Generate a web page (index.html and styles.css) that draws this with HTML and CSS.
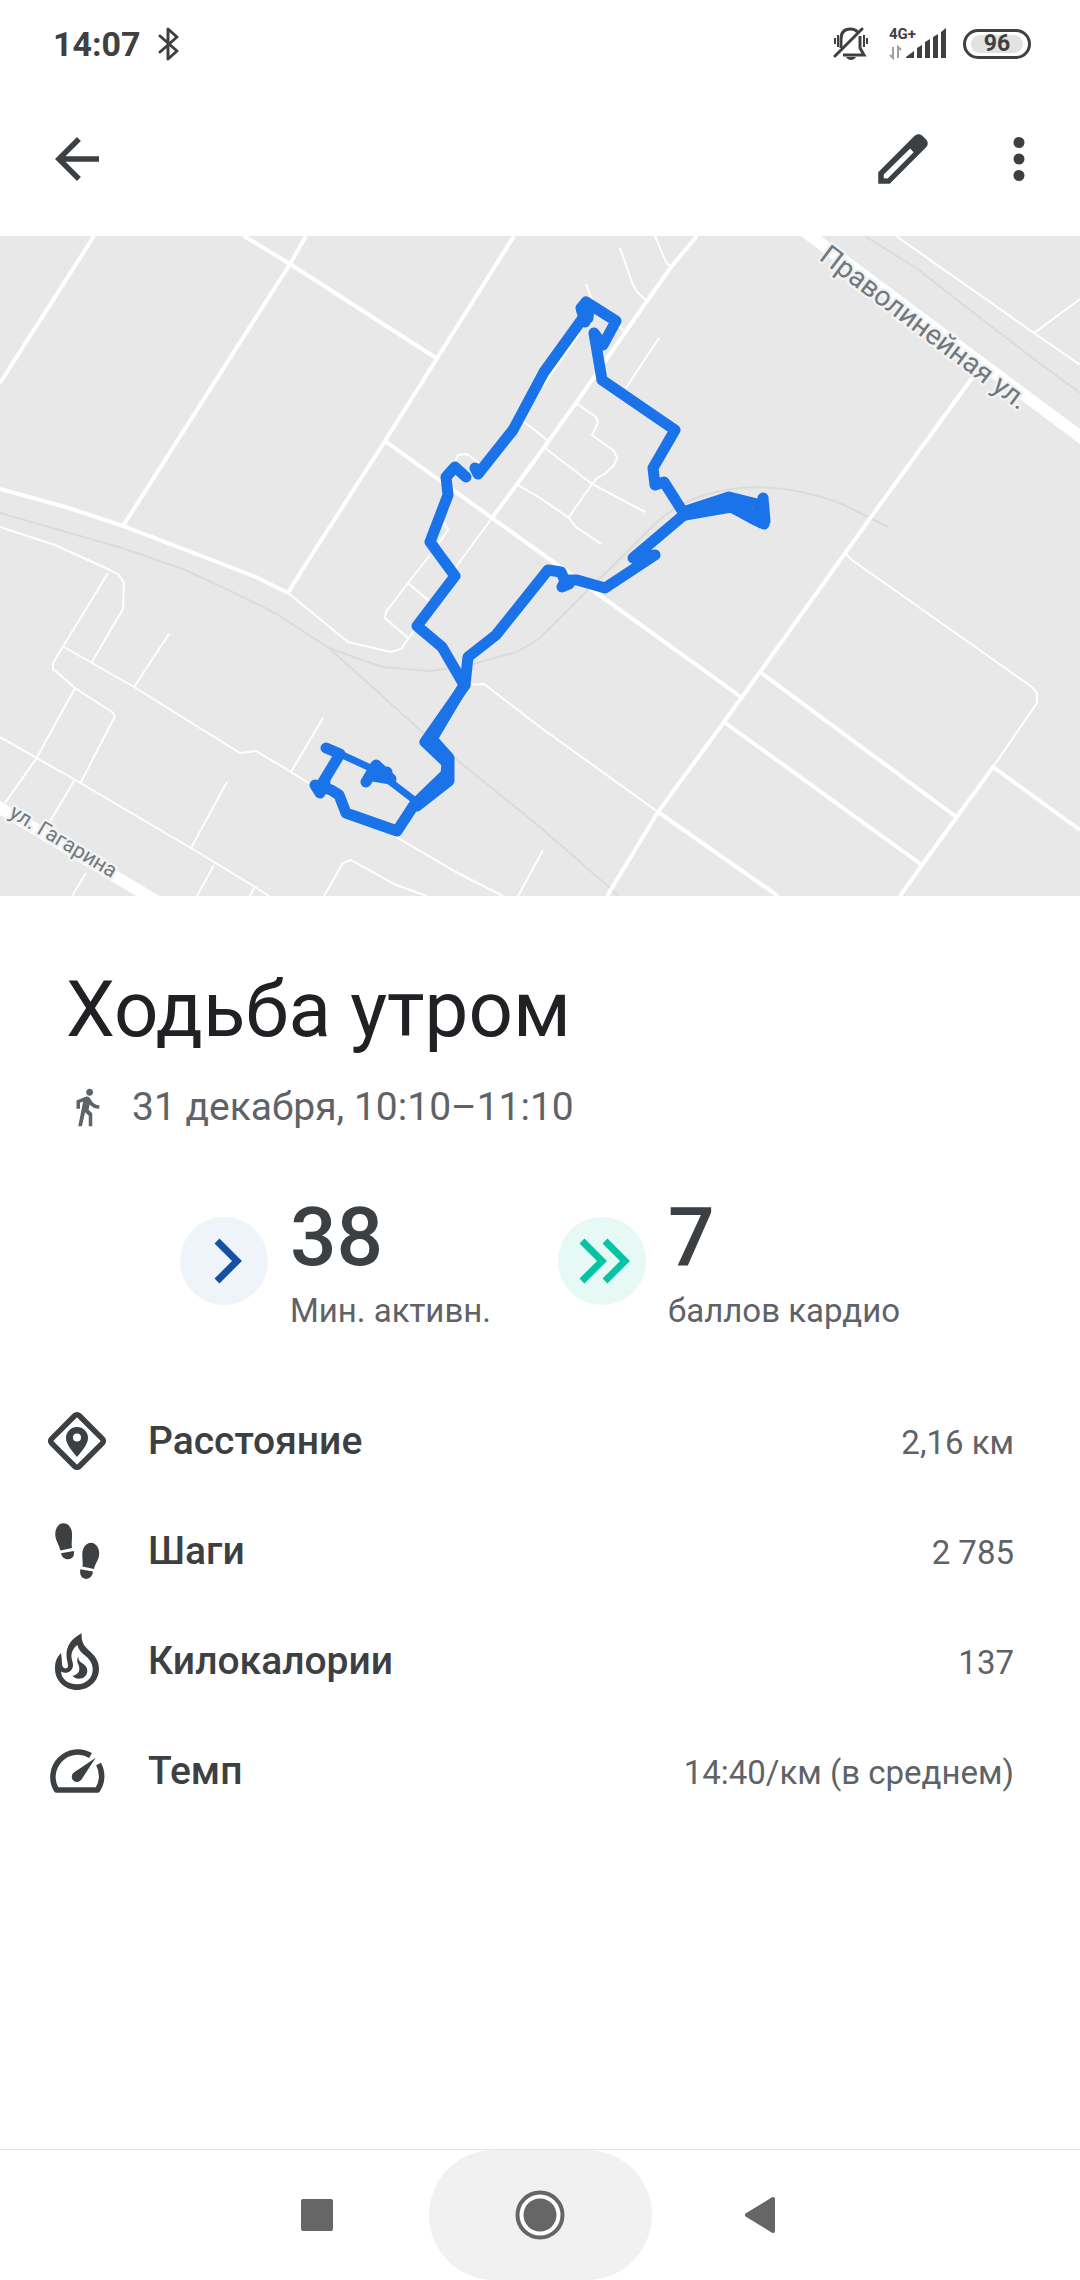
FILE: index.html
```html
<!DOCTYPE html>
<html lang="ru">
<head>
  <meta charset="UTF-8">
  <meta name="viewport" content="width=device-width, initial-scale=1.0">
  <title>Ходьба утром</title>
  <link rel="stylesheet" href="styles.css">
</head>
<body>
  <div class="status-bar">
    <span class="clock">14:07</span>
    <svg class="bluetooth" width="22" height="36" viewBox="0 0 22 36" aria-hidden="true">
      <path d="M2 10l17 15-9 8V3l9 8L2 26" fill="none" stroke="#404040" stroke-width="3" stroke-linejoin="round" stroke-linecap="round"/>
    </svg>
    <svg class="bell" width="36" height="34" viewBox="0 0 36 34" aria-hidden="true">
      <g fill="none" stroke="#404040" stroke-width="2">
        <path d="M2 11v6M5 8v12M31 8v12M34 11v6"/>
        <path d="M8 21V12C8 5 12 2 17.500 2c3 0 5.500 1 7 3M27 9v12l4 7H10" stroke-width="3"/>
        <path d="M2 29L29 2" stroke-width="3" stroke-linecap="round"/>
      </g>
      <path d="M13 30h10c-1 2-3 3-5 3s-4-1-5-3z" fill="#404040"/>
    </svg>
    <div class="network">
      <span class="network-type">4G+</span>
      <svg width="58" height="32" viewBox="0 0 58 32" aria-hidden="true">
        <path d="M4 19v11L1 27M9 30V19l3 3" fill="none" stroke="#a0a0a0" stroke-width="2"/>
        <path d="M17 29l8-6v7h-8zM28 20l5-3v13h-5zM36 14l5-3v19h-5zM44 9l5-3v24h-5zM52 4l5-4v30h-5z" fill="#404040"/>
      </svg>
    </div>
    <span class="battery"><span class="battery-level">96</span></span>
  </div>

  <header class="app-bar">
    <button class="icon-button" type="button" aria-label="Назад">
      <svg viewBox="0 0 24 24"><path d="M20 11H7.830l5.590-5.590L12 4l-8 8 8 8 1.410-1.410L7.830 13H20v-2z"/></svg>
    </button>
    <div class="app-bar-actions">
      <button class="icon-button" type="button" aria-label="Изменить">
        <svg viewBox="0 0 24 24"><path fill-rule="evenodd" d="M20.410 4.940l-1.350-1.350c-.78-.78-2.050-.78-2.830 0L3 16.820V21h4.180L20.410 7.770c.79-.78.79-2.050 0-2.830zM6.410 19.060L5 19v-1.360l9.600-9.500 1.270 1.420-9.460 9.500z"/></svg>
      </button>
      <button class="icon-button" type="button" aria-label="Ещё">
        <svg viewBox="0 0 24 24"><circle cx="12" cy="6" r="2"/><circle cx="12" cy="12" r="2"/><circle cx="12" cy="18" r="2"/></svg>
      </button>
    </div>
  </header>

  <main>
    <svg class="map" viewBox="0 0 1080 660" role="img" aria-label="Маршрут на карте">
      <g class="rail">
        <path d="M0 277L122 312L183 333L224 352L275 377L329 412L382 431L430 435L461 431L517 416L540 402L588 354L619 324L657 286Q680 266 705 259Q764 240 840 267L888 291"/>
        <path d="M329 412L420 494L540 591L619 660"/>
        <path d="M865 0L919 34L970 74L1026 117L1080 157"/>
      </g>
      <g class="street">
        <path d="M288 357L331 392L348 406L391 416L401 413L413 396L461 324L492 282"/>
        <path d="M0 291L55 309L110 334L119 339L124 347L123 373L92 426"/>
        <path d="M108 337L53 427V433L75 452L112 476L115 480L81 546"/>
        <path d="M64 411L134 451L240 517L256 515L291 536L393 599L456 636L503 660"/>
        <path d="M169 398L134 451M323 482L291 536M75 452L36 523L5 567"/>
        <path d="M0 501L77 545L191 612L255 651L269 660"/>
        <path d="M74 545L48 589M227 546L191 612M214 629L197 660M254 652L250 660M86 637L72 660"/>
        <path d="M324 660L343 627L351 624L396 649L427 660M543 614L518 660"/>
        <path d="M465 449L484 448L540 491L658 576"/>
        <path d="M993 531L1037 467V457L1032 451L852 324L845 317"/>
        <path d="M655 0L666 26L671 31M620 12L633 49L638 57L647 65M586 48L593 66M659 102L626 152M616 88L626 96"/>
        <path d="M576 167L596 181L598 187L592 199L614 215L617 222L614 229L605 238L597 242L592 248L569 281"/>
        <path d="M545 212L592 248L645 276M518 249L540 262L569 282L576 291L601 308M523 185L547 204"/>
        <path d="M455 226L458 219L467 218L479 227M444 287L448 294L439 307"/>
        <path d="M430 319L408 347L386 376L385 382L408 402M408 347L429 365M580 97L543 150"/>
        <path d="M896 0L1034 97L1080 129M1034 97L1080 63"/>
      </g>
      <g class="road">
        <path d="M94 0L0 147M244 0L290 28L436 122M306 0L290 28L123 290"/>
        <path d="M514 0L385 205L302 334L288 357"/>
        <path d="M0 253L69 272L123 290L238 334L258 342L288 357"/>
        <path d="M385 205L492 282L566 335L741 461"/>
        <path d="M972 142L871 281L760 436L724 486L658 576L607 660"/>
        <path d="M760 436L955 580M724 486L922 629M658 576L778 660M900 660L922 629L993 531L1080 594"/>
        <path d="M697 0L671 31L647 65L576 167L540 217L492 282"/>
      </g>
      <path class="avenue" d="M800 -8L1090 208M-10 566L158 666"/>
      <text class="street-name street-name-large" transform="translate(818 23) rotate(37)">Праволинейная ул.</text>
      <text class="street-name" transform="translate(8 580) rotate(31)">ул. Гагарина</text>
      <g class="route">
        <path d="M466 241L455 231L446 241L448 259L430 306L455 340L417 390L442 411L463 447"/>
        <path d="M475 232L478 238L513 194L544 136L583 82"/>
        <path d="M585 86L581 72L586 66L616 85L603 109L594 97L602 144L675 194L653 232L655 249L664 246L683 276"/>
        <path d="M588 82L589 72L582 75"/>
        <path d="M683 276L729 261L761 269L763 262L765 285L764 288L755 284L731 271L685 279M735 265L754 282M757 272L761 287M683 278L729 266"/>
        <path d="M685 278L633 322L655 319L605 352L577 344L569 344L569 348L562 351L565 345L561 336L548 334L496 399L468 421L465 449"/>
        <path d="M465 449L425 506L447 527L446 538L414 569L397 595L346 577L339 559L331 554L315 549L320 557L325 546"/>
        <path d="M464 449L432 503L449 522V545L417 570"/>
        <path d="M320 551L340 518M326 512L338 517"/>
        <path class="route-thin" d="M338 517L375 534L418 567"/>
        <path d="M366 546L376 529L391 543L373 540L387 536"/>
      </g>
    </svg>

    <section class="summary">
      <h1>Ходьба утром</h1>
      <p class="date">
        <svg viewBox="0 0 24 24" aria-hidden="true"><path d="M13.500 5.500c1.100 0 2-.9 2-2s-.9-2-2-2-2 .9-2 2 .9 2 2 2zM9.800 8.900L7 23h2.100l1.800-8 2.100 2v6h2v-7.500l-2.100-2 .6-3C14.800 12 16.800 13 19 13v-2c-1.900 0-3.500-1-4.300-2.400l-1-1.600c-.4-.6-1-1-1.700-1-.3 0-.5.1-.8.1L6 8.300V13h2V9.600l1.800-.7"/></svg>
        31 декабря, 10:10–11:10
      </p>
    </section>

    <section class="stats">
      <div class="stat">
        <svg viewBox="0 0 88 88" aria-hidden="true">
          <circle cx="44" cy="44" r="44" fill="#eff3fa"/>
          <path d="M37 24l20 20-20 20" fill="none" stroke="#174ea6" stroke-width="7"/>
        </svg>
        <div>
          <div class="stat-value">38</div>
          <div class="stat-label">Мин. активн.</div>
        </div>
      </div>
      <div class="stat">
        <svg viewBox="0 0 88 88" aria-hidden="true">
          <circle cx="44" cy="44" r="44" fill="#e6f9f5"/>
          <path d="M24 24l20 20-20 20M47 24l20 20-20 20" fill="none" stroke="#04c4a5" stroke-width="7"/>
        </svg>
        <div>
          <div class="stat-value">7</div>
          <div class="stat-label">баллов кардио</div>
        </div>
      </div>
    </section>

    <ul class="metrics">
      <li>
        <svg viewBox="0 0 66 66" aria-hidden="true">
          <rect x="13.500" y="13.500" width="39" height="39" rx="3" transform="rotate(45 33 33)" fill="none" stroke="#3c4043" stroke-width="5.500"/>
          <path fill-rule="evenodd" d="M33 49C26 41 22 35 22 30a11 11 0 0 1 22 0C44 35 40 41 33 49zM33 25.500a4 4 0 1 0 0 8 4 4 0 0 0 0-8z"/>
        </svg>
        <span class="metric-name">Расстояние</span>
        <span class="metric-value">2,16 км</span>
      </li>
      <li>
        <svg viewBox="0 0 66 66" aria-hidden="true">
          <path d="M19 5.300C14 5.500 11 11 11.300 17c.3 6 3.500 9 5.200 15.500L28 30c-.8-5 .3-9 0-15-.4-6-4-10-9-9.700z"/>
          <path d="M17 35.300L29.800 33c1 5-1.500 8-5.500 8.300-4 .2-6.300-2-7.300-6z"/>
          <path d="M47 24.700c-5 0-8.500 5-8.700 11-.2 5 .9 8 .2 12.800L50 51c1.200-6 5-9 5.200-15 .2-6-3-11-8.200-11.300z"/>
          <path d="M36.300 51.300L49 53.600c-.7 5-3.500 7.400-7 7.300-4.500-.2-6.500-4-5.700-9.600z"/>
        </svg>
        <span class="metric-name">Шаги</span>
        <span class="metric-value">2 785</span>
      </li>
      <li>
        <svg viewBox="0 0 66 66" aria-hidden="true">
          <path fill-rule="evenodd" d="M37.700 5.300C28 10 22 18 22.500 28c.1 3 1.500 7 1.500 10 0 4-6 3-6-2 0-4-.5-7-1-11C12 30 11 35 11 40.500 11 53 21 62 33 62s22-9 22-21c0-9-5-14-9.500-18C40 18 37 14 37.700 5.300zM33.300 17c1.500 6 6 9 9.500 12 3.500 3.500 5.900 7 5.900 12.500 0 8.500-6.700 14.800-15.700 14.800S17.500 51 17 43.500c5 3 11.500.5 12-6 .2-4-2-6-1.500-11 .3-3.500 2.500-7 5.800-9.500z"/>
          <path d="M34.300 28.700c0 3.500 1.500 5 4 6.500 3 2 5 4.300 5 7.500 0 4.500-3.500 8-8.500 8-2.500 0-4.500-1-6.500-3 4.500-.5 7.500-3.500 7-8-.3-3-1.800-4-2-6.500-.1-2 .3-3.500 1-4.500z"/>
        </svg>
        <span class="metric-name">Килокалории</span>
        <span class="metric-value">137</span>
      </li>
      <li>
        <svg viewBox="0 0 66 66" aria-hidden="true">
          <path d="M46.500 17.500A25 25 0 0 0 12.500 52H53.500A25 25 0 0 0 54.500 26" fill="none" stroke="#3c4043" stroke-width="5.500" stroke-linejoin="round"/>
          <path d="M51.700 19.700L37.500 41.500a5.300 5.300 0 1 1-8-6.800z"/>
        </svg>
        <span class="metric-name">Темп</span>
        <span class="metric-value">14:40/км (в среднем)</span>
      </li>
    </ul>
  </main>

  <nav class="system-nav">
    <button type="button" aria-label="Недавние">
      <svg viewBox="0 0 50 50"><rect x="9" y="9" width="32" height="32" rx="2"/></svg>
    </button>
    <button type="button" class="home" aria-label="Главный экран">
      <svg viewBox="0 0 50 50"><circle cx="25" cy="25" r="22.500" fill="#fff" stroke="#666" stroke-width="4"/><circle cx="25" cy="25" r="16.500"/></svg>
    </button>
    <button type="button" aria-label="Назад">
      <svg viewBox="0 0 50 50"><path d="M9 25L35 9V41z" stroke="#666" stroke-width="4" stroke-linejoin="round"/></svg>
    </button>
  </nav>
</body>
</html>
```
FILE: styles.css
```css
* {
  box-sizing: border-box;
}
body {
  font-family: Roboto, "Noto Sans", sans-serif;
  margin: 0;
  min-height: 100vh;
  display: flex;
  flex-direction: column;
  background-color: #fff;
  color: #3c4043;
}
button {
  border: 0;
  padding: 0;
  background: none;
}

/* status bar */
.status-bar {
  display: flex;
  align-items: center;
  height: 88px;
  padding: 0 49px 0 53px;
  color: #404040;
}
.clock {
  font-size: 34px;
  font-weight: 700;
}
.bluetooth {
  margin-left: 17px;
}
.bell {
  margin-left: auto;
}
.network {
  position: relative;
  height: 32px;
  margin: 0 16px 0 20px;
}
.network-type {
  position: absolute;
  top: -2px;
  left: 0;
  font-size: 15px;
  line-height: 16px;
  font-weight: 700;
}
.battery {
  width: 68px;
  height: 30px;
  padding: 3px 5px;
  border: 3px solid #404040;
  border-radius: 15px;
}
.battery-level {
  display: block;
  border-radius: 9px;
  background-color: #e2e2e2;
  font-size: 23px;
  line-height: 18px;
  font-weight: 700;
  text-align: center;
}

/* app bar */
.app-bar {
  display: flex;
  justify-content: space-between;
  padding: 38px 28px 44px 44px;
}
.app-bar-actions {
  display: flex;
  gap: 50px;
}
.icon-button svg {
  display: block;
  width: 66px;
  height: 66px;
  fill: #3c4043;
}

/* map */
.map {
  display: block;
  width: 100%;
  background-color: #e8e8e8;
}
.map path {
  fill: none;
}
.rail {
  stroke: #dadcdc;
  stroke-width: 2;
}
.street {
  stroke: #fff;
  stroke-width: 2;
}
.road {
  stroke: #fff;
  stroke-width: 4;
}
.avenue {
  stroke: #fff;
  stroke-width: 12;
}
.street-name {
  font-size: 21px;
  fill: #73787c;
  stroke: #f1f3f4;
  stroke-width: 5px;
  stroke-linejoin: round;
  paint-order: stroke;
}
.street-name-large {
  font-size: 28px;
}
.route {
  stroke: #1a73e8;
  stroke-width: 11;
  stroke-linecap: round;
  stroke-linejoin: round;
}
.route-thin {
  stroke-width: 7;
}

/* summary */
.summary {
  padding: 64px 66px 0;
}
h1 {
  margin: 0;
  font-size: 78px;
  line-height: 100px;
  font-weight: 400;
  color: #202124;
}
.date {
  display: flex;
  align-items: center;
  gap: 24px;
  margin: 23px 0 0;
  font-size: 39px;
  line-height: 48px;
  color: #5f6368;
}
.date svg {
  width: 42px;
  height: 42px;
  fill: #5f6368;
}

/* stats */
.stats {
  display: flex;
  justify-content: center;
  gap: 67px;
  padding-top: 60px;
}
.stat {
  display: flex;
  align-items: center;
  gap: 22px;
}
.stat svg {
  width: 88px;
  height: 88px;
}
.stat-value {
  font-size: 82px;
  line-height: 92px;
  font-weight: 500;
}
.stat-label {
  margin-top: 8px;
  font-size: 33px;
  line-height: 40px;
  color: #5f6368;
}

/* metrics */
.metrics {
  margin: 0;
  padding: 55px 66px 0 44px;
  list-style: none;
}
.metrics li {
  display: flex;
  align-items: center;
  height: 110px;
}
.metrics svg {
  width: 66px;
  height: 66px;
  margin-right: 38px;
  fill: #3c4043;
}
.metric-name {
  font-size: 39px;
  font-weight: 500;
}
.metric-value {
  margin-left: auto;
  padding-top: 2px;
  font-size: 33px;
  color: #5f6368;
}

/* system navigation */
.system-nav {
  display: flex;
  justify-content: center;
  height: 131px;
  margin-top: auto;
  border-top: 1px solid #e2e2e2;
}
.system-nav button {
  display: flex;
  align-items: center;
  justify-content: center;
  width: 223px;
}
.system-nav .home {
  border-radius: 65px;
  background-color: #f1f1f1;
}
.system-nav svg {
  width: 50px;
  height: 50px;
  fill: #666;
}
```
